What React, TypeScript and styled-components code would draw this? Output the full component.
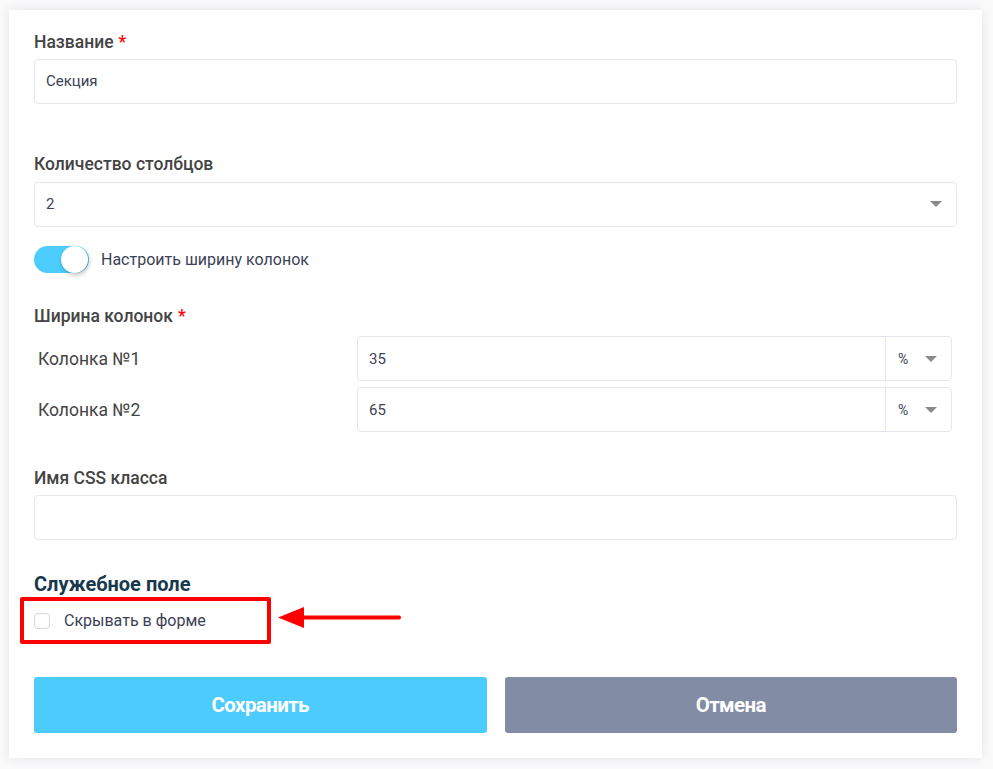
import styled, { createGlobalStyle } from 'styled-components';

const GlobalStyle = createGlobalStyle`
  html, body {
    margin: 0;
    padding: 0;
    background: #ffffff;
    font-family: Roboto, 'Liberation Sans', Arial, sans-serif;
  }
  * {
    box-sizing: border-box;
  }
`;

const Page = styled.div`
  width: 993px;
  height: 769px;
  padding: 10px 11px 11px 9px;
  background: #fafafb;
`;

const Card = styled.div`
  position: relative;
  background: #ffffff;
  box-shadow: 0 0 10px rgba(30, 40, 70, 0.1);
  padding: 23px 25px 25px 25px;
  display: flex;
  flex-direction: column;
`;

const Field = styled.div<{ $gap?: number }>`
  display: flex;
  flex-direction: column;
  margin-top: ${(p) => p.$gap ?? 0}px;
`;

const Label = styled.div<{ $mb?: number }>`
  font-size: 17.5px;
  font-weight: 500;
  line-height: 19px;
  color: #444444;
  margin-bottom: ${(p) => p.$mb ?? 7}px;

  span {
    color: #ff0000;
    margin-left: 5px;
  }
`;

const Input = styled.div`
  height: 45px;
  border: 1px solid #e3e6ee;
  border-radius: 4px;
  padding: 0 11px 2px;
  display: flex;
  align-items: center;
  font-size: 15px;
  color: #3b4256;
  background: #fff;
`;

const Select = styled(Input)`
  justify-content: space-between;
  padding-right: 14px;
`;

const Caret = styled.span`
  width: 0;
  height: 0;
  border-left: 6px solid transparent;
  border-right: 6px solid transparent;
  border-top: 6px solid #8a8a8a;
`;

const ToggleRow = styled.div`
  display: flex;
  align-items: center;
  gap: 12px;
  margin-top: 19px;
  font-size: 16px;
  color: #3b4256;
`;

const Toggle = styled.div`
  position: relative;
  width: 55px;
  height: 27px;
  border-radius: 14px;
  background: #4ccdfd;

  &::after {
    content: '';
    position: absolute;
    right: 1px;
    top: 0;
    width: 27px;
    height: 27px;
    border-radius: 50%;
    background: #fff;
    box-shadow: 1px 2px 4px rgba(0, 0, 0, 0.25);
  }
`;

const WidthRow = styled.div`
  display: grid;
  grid-template-columns: 319px 1fr;
  align-items: center;
  padding: 0 5px 0 4px;
  & + & {
    margin-top: 6px;
  }
`;

const RowLabel = styled.div`
  font-size: 17.5px;
  color: #444444;
`;

const AddonInput = styled.div`
  height: 45px;
  border: 1px solid #e3e6ee;
  border-radius: 4px;
  display: flex;
  font-size: 15px;
  color: #3b4256;
`;

const AddonValue = styled.div`
  flex: 1;
  display: flex;
  align-items: center;
  padding: 0 11px;
`;

const Addon = styled.div`
  width: 66px;
  border-left: 1px solid #e3e6ee;
  display: flex;
  align-items: center;
  justify-content: space-between;
  padding: 0 14px 0 12px;
  font-size: 14px;
`;

const SectionTitle = styled.div`
  margin-top: 33px;
  font-size: 20px;
  font-weight: 700;
  line-height: 22px;
  color: #17394d;
`;

const CheckRow = styled.div`
  display: flex;
  align-items: center;
  gap: 14px;
  margin-top: 16px;
  font-size: 16px;
  color: #3b4256;
`;

const Checkbox = styled.span`
  width: 16px;
  height: 16px;
  border: 1px solid #d3d7e0;
  border-radius: 4px;
  background: #fff;
`;

const Highlight = styled.div`
  position: absolute;
  left: 11px;
  top: 587px;
  width: 251px;
  height: 47px;
  border: 4px solid #ff0000;
  border-radius: 2px;
`;

const Arrow = styled.svg`
  position: absolute;
  left: 268px;
  top: 595px;
`;

const Buttons = styled.div`
  display: grid;
  grid-template-columns: 1fr 1fr;
  gap: 18px;
  margin-top: 47px;
`;

const Button = styled.button<{ $variant: 'primary' | 'secondary' }>`
  height: 56px;
  border: none;
  border-radius: 3px;
  background: ${(p) => (p.$variant === 'primary' ? '#4ccbfd' : '#828ca5')};
  color: #ffffff;
  font-family: Roboto, 'Liberation Sans', Arial, sans-serif;
  font-size: 20.5px;
  font-weight: 700;
  letter-spacing: -0.6px;
  cursor: pointer;
`;

export default function App() {
  return (
    <>
      <GlobalStyle />
      <Page>
        <Card>
          <Field>
            <Label>
              Название<span>*</span>
            </Label>
            <Input>Секция</Input>
          </Field>

          <Field $gap={51}>
            <Label $mb={8}>Количество столбцов</Label>
            <Select>
              2
              <Caret />
            </Select>
          </Field>

          <ToggleRow>
            <Toggle />
            Настроить ширину колонок
          </ToggleRow>

          <Field $gap={34}>
            <Label $mb={10}>
              Ширина колонок<span>*</span>
            </Label>
            {['35', '65'].map((v, i) => (
              <WidthRow key={v}>
                <RowLabel>Колонка №{i + 1}</RowLabel>
                <AddonInput>
                  <AddonValue>{v}</AddonValue>
                  <Addon>
                    %
                    <Caret />
                  </Addon>
                </AddonInput>
              </WidthRow>
            ))}
          </Field>

          <Field $gap={37}>
            <Label>Имя CSS класса</Label>
            <Input />
          </Field>

          <SectionTitle>Служебное поле</SectionTitle>
          <CheckRow>
            <Checkbox />
            Скрывать в форме
          </CheckRow>

          <Buttons>
            <Button $variant="primary">Сохранить</Button>
            <Button $variant="secondary">Отмена</Button>
          </Buttons>

          <Highlight />
          <Arrow width="136" height="26" viewBox="0 0 136 26">
            <line x1="20" y1="12.5" x2="122" y2="12.5" stroke="#ff0000" strokeWidth="4" strokeLinecap="round" />
            <polygon points="1,12.5 27,2 27,23" fill="#ff0000" />
          </Arrow>
        </Card>
      </Page>
    </>
  );
}
